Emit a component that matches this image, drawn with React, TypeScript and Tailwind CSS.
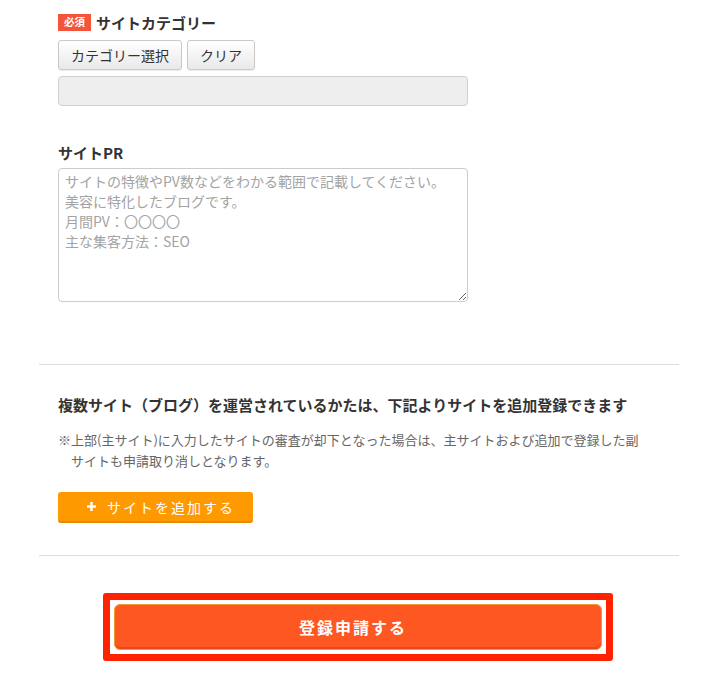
import React from "react";

export default function App() {
  const placeholder =
    "サイトの特徴やPV数などをわかる範囲で記載してください。\n美容に特化したブログです。\n月間PV：〇〇〇〇\n主な集客方法：SEO";
  return (
    <div className="w-[728px] h-[682px] bg-white text-[#333] font-['Noto_Sans_CJK_JP','Noto_Sans',sans-serif] overflow-hidden">
      <div className="ml-[39px] w-[640px]">
        {/* Section 1 */}
        <div className="px-[19px] pt-[14px] pb-[62px]">
          <div className="flex items-center h-[17px]">
            <span className="flex items-center justify-center h-[17px] w-[33px] bg-[#f4553a] text-white text-[10.5px] font-bold leading-none">
              必須
            </span>
            <span className="ml-[5px] text-[15px] font-bold leading-[20px] text-[#333]">
              サイトカテゴリー
            </span>
          </div>
          <div className="mt-[9px] flex gap-[5px]">
            <button className="h-[30px] px-[12px] rounded-[3px] border border-[#c9c9c9] bg-gradient-to-b from-white to-[#e9e9e9] text-[14px] text-[#333] shadow-[0_1px_1px_rgba(0,0,0,0.08)]">
              カテゴリー選択
            </button>
            <button className="h-[30px] px-[12px] rounded-[3px] border border-[#c9c9c9] bg-gradient-to-b from-white to-[#e9e9e9] text-[14px] text-[#333] shadow-[0_1px_1px_rgba(0,0,0,0.08)]">
              クリア
            </button>
          </div>
          <div className="mt-[6px] h-[30px] w-[410px] rounded-[4px] border border-[#cfcfcf] bg-[#eeeeee]" />
          <div className="mt-[37px] text-[15px] font-bold leading-[20px] text-[#333]">
            サイトPR
          </div>
          <textarea
            className="mt-[5px] block h-[134px] w-[410px] rounded-[4px] border border-[#cccccc] px-[6px] pt-[2px] pb-[2px] text-[14px] leading-[20px] text-[#333] placeholder:text-[#a3a3a3] outline-none"
            placeholder={placeholder}
          />
        </div>

        {/* Section 2 */}
        <div className="border-t border-[#dddddd] px-[19px] pt-[30px] pb-[32px]">
          <div className="text-[15px] font-bold leading-[20px] text-[#333]">
            複数サイト（ブログ）を運営されているかたは、下記よりサイトを追加登録できます
          </div>
          <p className="mt-[14px] w-[590px] pl-[13px] -indent-[13px] text-[13px] leading-[21px] text-[#666]">
            ※上部(主サイト)に入力したサイトの審査が却下となった場合は、主サイトおよび追加で登録した副サイトも申請取り消しとなります。
          </p>
          <button className="mt-[21px] flex items-center h-[31px] w-[195px] pl-[29px] rounded-[3px] bg-[#ff9900] border-b-2 border-[#e88a00] text-white text-[14px] tracking-[2px]">
            <svg width="9" height="9" viewBox="0 0 9 9" className="shrink-0">
              <rect x="3.3" y="0" width="2.4" height="9" fill="white" />
              <rect x="0" y="3.3" width="9" height="2.4" fill="white" />
            </svg>
            <span className="ml-[11px] leading-none">サイトを追加する</span>
          </button>
        </div>

        {/* Section 3 */}
        <div className="border-t border-[#dddddd] pt-[37px]">
          <div className="ml-[64px] w-[510px] rounded-[3px] border-[7px] border-[#ff2200] px-[4px] py-[4px]">
            <button className="flex items-center justify-center h-[46px] w-full pr-[10px] rounded-[6px] border border-[#f59a32] bg-[#ff5722] shadow-[inset_0_-2px_0_#e44a1c] text-white text-[16px] font-bold tracking-[2px]">
              登録申請する
            </button>
          </div>
        </div>
      </div>
    </div>
  );
}
